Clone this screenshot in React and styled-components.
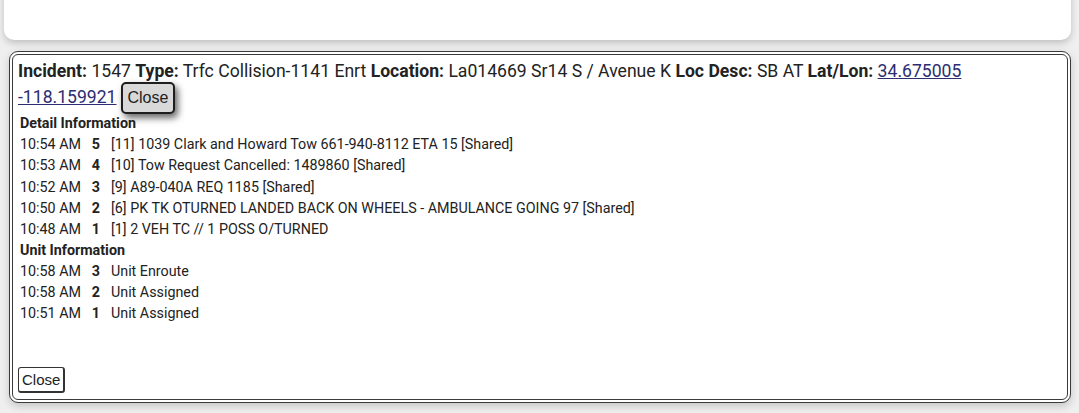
import React from "react";
import styled, { createGlobalStyle } from "styled-components";

const GlobalStyle = createGlobalStyle`
  html, body {
    margin: 0;
    padding: 0;
    background: #efefef;
  }
  body {
    font-family: Roboto, "Liberation Sans", Arial, sans-serif;
    color: #222;
  }
`;

const details = [
  { time: "10:54 AM", num: 5, text: "[11] 1039 Clark and Howard Tow 661-940-8112 ETA 15 [Shared]" },
  { time: "10:53 AM", num: 4, text: "[10] Tow Request Cancelled: 1489860 [Shared]" },
  { time: "10:52 AM", num: 3, text: "[9] A89-040A REQ 1185 [Shared]" },
  { time: "10:50 AM", num: 2, text: "[6] PK TK OTURNED LANDED BACK ON WHEELS - AMBULANCE GOING 97 [Shared]" },
  { time: "10:48 AM", num: 1, text: "[1] 2 VEH TC // 1 POSS O/TURNED" },
];

const units = [
  { time: "10:58 AM", num: 3, text: "Unit Enroute" },
  { time: "10:58 AM", num: 2, text: "Unit Assigned" },
  { time: "10:51 AM", num: 1, text: "Unit Assigned" },
];

const Page = styled.div`
  display: flex;
  flex-direction: column;
  gap: 11px;
  padding: 0 8px 10px 4px;
`;

const TopCard = styled.div`
  height: 60px;
  margin-top: -20px;
  background: #fff;
  border-radius: 10px;
  box-shadow: 0 3px 7px rgba(0, 0, 0, 0.2);
`;

const Panel = styled.div`
  margin-left: 5px;
  height: 352px;
  box-sizing: border-box;
  display: flex;
  flex-direction: column;
  background: #fff;
  border: 4px double #3a3a3a;
  border-radius: 9px;
  padding: 3px 90px 6px 5px;
  box-shadow: 0 3px 8px rgba(0, 0, 0, 0.18);
`;

const Header = styled.div`
  font-size: 17.6px;
  line-height: 26px;
  margin-bottom: 2px;

  b {
    font-weight: 700;
  }

  a {
    color: #2d2d72;
    text-decoration: underline;
  }
`;

const TopClose = styled.button`
  font-family: "Liberation Sans", Arial, sans-serif;
  font-size: 16px;
  margin: -3px 0 -3px 4px;
  padding: 5px 5px;
  background: #d9d9d9;
  color: #222;
  border: 2px solid #1e1e1e;
  border-radius: 5px;
  box-shadow: 3px 4px 7px rgba(0, 0, 0, 0.6);
  vertical-align: middle;
`;

const SectionTitle = styled.div`
  font-size: 14.3px;
  font-weight: 700;
  line-height: 21px;
  padding-left: 2px;
`;

const Rows = styled.div`
  display: grid;
  grid-template-columns: auto 10px 1fr;
  column-gap: 10px;
  font-size: 14.3px;
  line-height: 21.1px;
  padding-left: 2px;
`;

const Num = styled.span`
  font-weight: 700;
  text-align: center;
`;

const Footer = styled.div`
  margin-top: auto;
`;

const BottomClose = styled.button`
  font-family: "Liberation Sans", Arial, sans-serif;
  font-size: 15px;
  padding: 3px 3px;
  background: #fff;
  color: #222;
  border: 1px solid #333;
  border-bottom-width: 2px;
  border-right-width: 2px;
  border-radius: 3px;
`;

const LogRows = ({ items }) => (
  <Rows>
    {items.map((r, i) => (
      <React.Fragment key={i}>
        <span>{r.time}</span>
        <Num>{r.num}</Num>
        <span>{r.text}</span>
      </React.Fragment>
    ))}
  </Rows>
);

export default function App() {
  return (
    <>
      <GlobalStyle />
      <Page>
        <TopCard />
        <Panel>
          <Header>
            <b>Incident:</b> 1547 <b>Type:</b> Trfc Collision-1141 Enrt <b>Location:</b> La014669 Sr14 S / Avenue K{" "}
            <b>Loc Desc:</b> SB AT <b>Lat/Lon:</b> <a href="#">34.675005 -118.159921</a>
            <TopClose>Close</TopClose>
          </Header>
          <SectionTitle>Detail Information</SectionTitle>
          <LogRows items={details} />
          <SectionTitle>Unit Information</SectionTitle>
          <LogRows items={units} />
          <Footer>
            <BottomClose>Close</BottomClose>
          </Footer>
        </Panel>
      </Page>
    </>
  );
}
